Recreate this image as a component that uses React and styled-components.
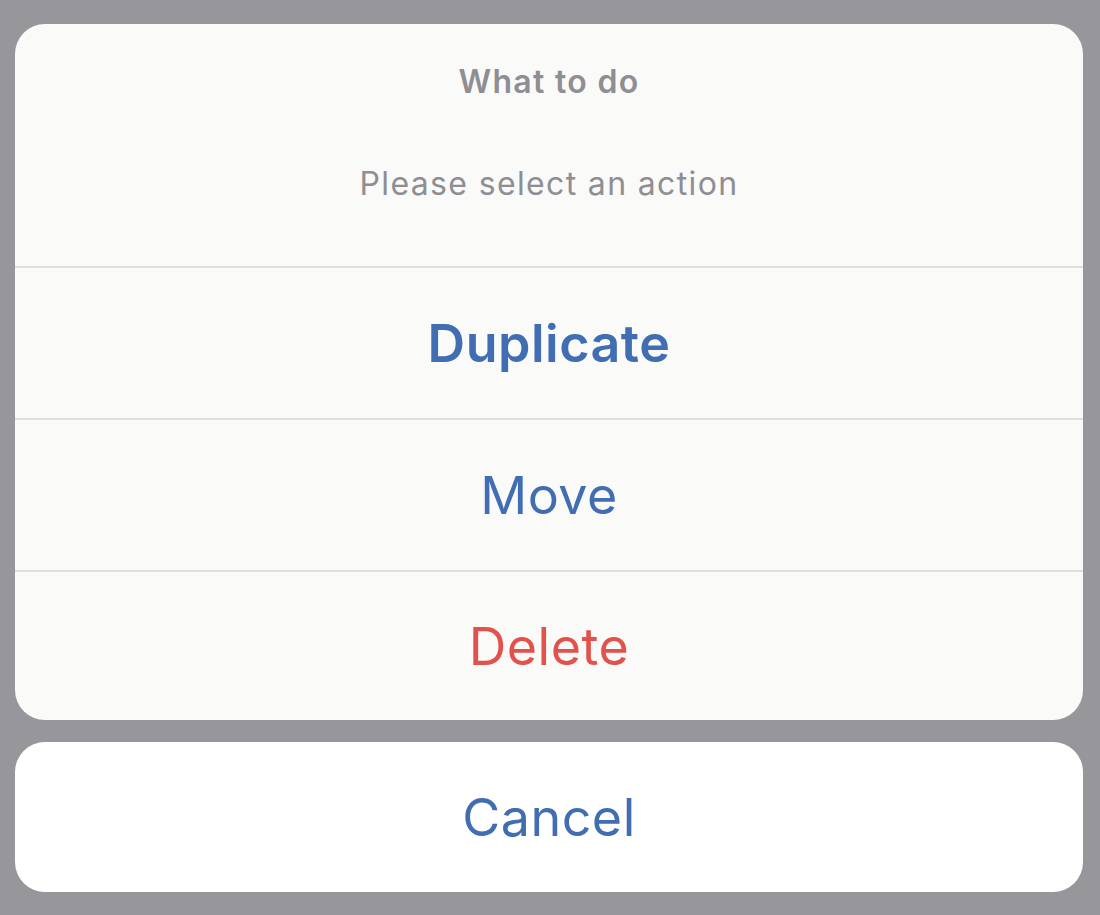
import React from "react";
import styled, { createGlobalStyle } from "styled-components";

const GlobalStyle = createGlobalStyle`
  html, body {
    margin: 0;
    padding: 0;
    background: #97969b;
  }
  body {
    font-family: Inter, "Liberation Sans", sans-serif;
  }
`;

const Screen = styled.div`
  width: 1100px;
  height: 915px;
  box-sizing: border-box;
  padding: 24px 17px 0 15px;
  display: flex;
  flex-direction: column;
  gap: 22px;
  background: #97969b;
`;

const Sheet = styled.div`
  background: #fafaf9;
  border-radius: 30px;
  overflow: hidden;
  display: flex;
  flex-direction: column;
`;

const Header = styled.div`
  height: 242px;
  display: flex;
  flex-direction: column;
  align-items: center;
  box-sizing: border-box;
  padding-top: 38px;
  color: #8e8e93;
`;

const Title = styled.div`
  font-size: 32px;
  font-weight: 600;
  line-height: 40px;
  letter-spacing: 1.3px;
`;

const Message = styled.div`
  margin-top: 62px;
  font-size: 32px;
  font-weight: 400;
  line-height: 40px;
  letter-spacing: 1.35px;
`;

const Action = styled.div`
  height: ${(p) => (p.$last ? 150 : 152)}px;
  display: flex;
  align-items: center;
  justify-content: center;
  border-top: 2px solid #dedede;
  box-sizing: border-box;
  font-size: 52px;
  letter-spacing: 0.5px;
  font-weight: ${(p) => (p.$bold ? 600 : 400)};
  color: ${(p) => (p.$danger ? "#e3514c" : "#416db2")};
`;

const CancelCard = styled(Action)`
  height: 150px;
  border-top: none;
  background: #ffffff;
  border-radius: 30px;
`;

export default function App() {
  return (
    <>
      <GlobalStyle />
      <Screen>
        <Sheet>
          <Header>
            <Title>What to do</Title>
            <Message>Please select an action</Message>
          </Header>
          <Action $bold>Duplicate</Action>
          <Action>Move</Action>
          <Action $danger $last>Delete</Action>
        </Sheet>
        <CancelCard>Cancel</CancelCard>
      </Screen>
    </>
  );
}
